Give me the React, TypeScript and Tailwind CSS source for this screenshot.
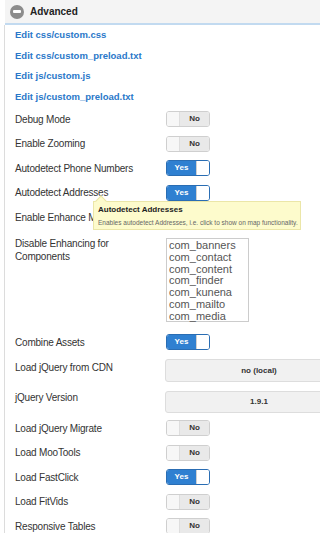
import React from "react";

const font = { fontFamily: '"Liberation Sans", Arial, sans-serif' };

function Toggle({ on }: { on: boolean }) {
  if (on) {
    return (
      <div className="flex shrink-0 w-[44px] h-[16px] rounded-[3px] border border-[#2a6db3] overflow-hidden">
        <div className="flex-1 bg-[#2f80d1] text-white text-[8px] font-bold flex items-center justify-center">Yes</div>
        <div className="w-[13px] bg-white border-l border-[#d0d0d0]" />
      </div>
    );
  }
  return (
    <div className="flex shrink-0 w-[44px] h-[16px] rounded-[3px] border border-[#cfcfcf] overflow-hidden">
      <div className="w-[13px] bg-[#f7f7f7] border-r border-[#dedede]" />
      <div className="flex-1 bg-[#e9e9e9] text-[#333] text-[8px] font-bold flex items-center justify-center">No</div>
    </div>
  );
}

function Row({ label, on }: { label: string; on?: boolean }) {
  return (
    <div className="flex items-center h-[24.5px]">
      <div className="w-[151px] shrink-0 text-[10px] tracking-[-0.2px] text-[#333] whitespace-nowrap">{label}</div>
      {on !== undefined && <Toggle on={on} />}
    </div>
  );
}

const links = [
  "Edit css/custom.css",
  "Edit css/custom_preload.txt",
  "Edit js/custom.js",
  "Edit js/custom_preload.txt",
];

const components = [
  "com_banners",
  "com_contact",
  "com_content",
  "com_finder",
  "com_kunena",
  "com_mailto",
  "com_media",
];

export default function App() {
  return (
    <div style={font} className="relative w-[320px] h-[533px] overflow-hidden bg-white">
      <div className="ml-[5px] w-[400px] h-[25px] bg-[#f4f4f4] border-b-2 border-[#c2daf0] flex items-center gap-[6px] pl-[5px]">
        <div className="w-[14px] h-[14px] rounded-full bg-[#8c8c8c] flex items-center justify-center">
          <div className="w-[8px] h-[3px] bg-white rounded-[1px]" />
        </div>
        <span className="text-[10px] font-bold text-[#222]">Advanced</span>
      </div>
      <div className="ml-[4px] w-[500px] border-l border-[#dcdcdc] pl-[10px]">
        <div className="flex flex-col">
          {links.map((l) => (
            <a key={l} className="h-[20.5px] flex items-center text-[9.5px] font-bold text-[#2a78c9]">
              {l}
            </a>
          ))}
        </div>
        <Row label="Debug Mode" on={false} />
        <Row label="Enable Zooming" on={false} />
        <Row label="Autodetect Phone Numbers" on={true} />
        <Row label="Autodetect Addresses" on={true} />
        <Row label="Enable Enhance Mode" />
        <div className="flex h-[100.5px]">
          <div className="w-[151px] shrink-0 pt-[7px] text-[10px] tracking-[-0.2px] leading-[13px] text-[#333]">
            Disable Enhancing for
            <br />
            Components
          </div>
          <div className="mt-[8.5px] w-[83px] h-[84px] shrink-0 border border-[#cccccc] pl-[2px] pt-[1px]">
            {components.map((c) => (
              <div key={c} className="text-[11px] leading-[11.8px] text-[#555]">{c}</div>
            ))}
          </div>
        </div>
        <Row label="Combine Assets" on={true} />
        <div className="flex h-[31.5px]">
          <div className="w-[150px] shrink-0 pt-[6.5px] text-[10px] tracking-[-0.2px] leading-[14px] text-[#333]">Load jQuery from CDN</div>
          <div className="mt-[4.5px] w-[188px] h-[23px] shrink-0 rounded-[3px] border border-[#dddddd] bg-[#f1f1f1] flex items-center justify-center text-[8px] font-bold text-[#333]">
            no (local)
          </div>
        </div>
        <div className="flex h-[30px]">
          <div className="w-[150px] shrink-0 pt-[5px] text-[10px] tracking-[-0.2px] leading-[14px] text-[#333]">jQuery Version</div>
          <div className="mt-[5px] w-[188px] h-[22px] shrink-0 rounded-[3px] border border-[#dddddd] bg-[#f1f1f1] flex items-center justify-center text-[8px] font-bold text-[#333]">
            1.9.1
          </div>
        </div>
        <Row label="Load jQuery Migrate" on={false} />
        <Row label="Load MooTools" on={false} />
        <Row label="Load FastClick" on={true} />
        <Row label="Load FitVids" on={false} />
        <Row label="Responsive Tables" on={false} />
      </div>
      <div className="absolute left-[93px] top-[201px] w-[208px] h-[29px] bg-[#fdfbcc] border border-[#ebe6a8] px-[4px] pt-[3px]">
        <div className="absolute -top-[5px] left-[3px] w-[8px] h-[8px] bg-[#fdfbcc] border-l border-t border-[#ebe6a8] rotate-45" />
        <div className="text-[8px] font-bold text-[#222] leading-[10px]">Autodetect Addresses</div>
        <div className="mt-[3px] text-[6.5px] text-[#666] leading-[9px] whitespace-nowrap">
          Enables autodetect Addresses, i.e. click to show on map functionality.
        </div>
      </div>
    </div>
  );
}
